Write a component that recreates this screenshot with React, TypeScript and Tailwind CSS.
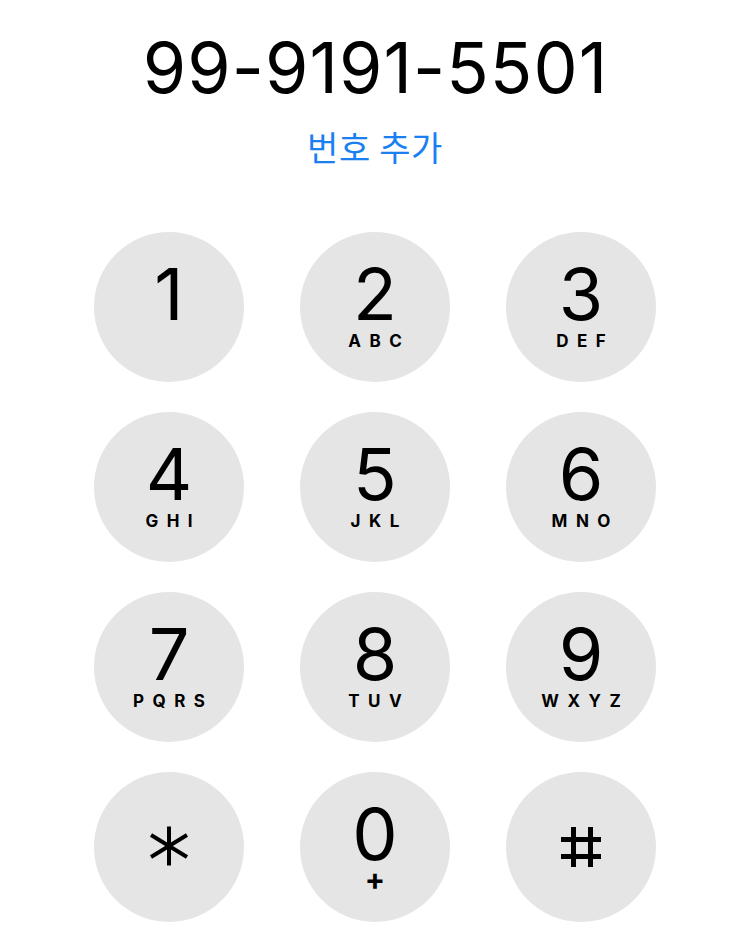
import React from "react";

const keys = [
  { digit: "1", letters: "" },
  { digit: "2", letters: "ABC" },
  { digit: "3", letters: "DEF" },
  { digit: "4", letters: "GHI" },
  { digit: "5", letters: "JKL" },
  { digit: "6", letters: "MNO" },
  { digit: "7", letters: "PQRS" },
  { digit: "8", letters: "TUV" },
  { digit: "9", letters: "WXYZ" },
];

const Star = () => (
  <svg width="38" height="40" viewBox="0 0 38 40" className="mt-[-2px]">
    <g stroke="#000" strokeWidth="4" strokeLinecap="butt">
      <line x1="19" y1="0.5" x2="19" y2="39.5" />
      <line x1="1" y1="9" x2="37" y2="31" />
      <line x1="1" y1="31" x2="37" y2="9" />
    </g>
  </svg>
);

const Hash = () => (
  <svg width="40" height="40" viewBox="0 0 40 40">
    <g fill="#000">
      <rect x="10" y="0" width="5" height="40" />
      <rect x="27" y="0" width="5" height="40" />
      <rect x="0" y="10" width="40" height="5" />
      <rect x="0" y="27" width="40" height="5" />
    </g>
  </svg>
);

const Key = ({ digit, letters }: { digit: string; letters: string }) => (
  <button className="w-[150px] h-[150px] rounded-full bg-[#e5e5e5] flex flex-col items-center pt-[32px]">
    <span className="text-[72px] leading-[60px] font-normal text-black">{digit}</span>
    <span className="mt-[9px] h-[17px] text-[17px] leading-none font-bold tracking-[0.5em] pl-[0.5em] text-black">
      {letters}
    </span>
  </button>
);

export default function App() {
  return (
    <div
      className="w-[750px] h-[936px] bg-white flex flex-col items-center overflow-hidden"
      style={{ fontFamily: "Inter, 'Noto Sans CJK KR', sans-serif" }}
    >
      <h1 className="pt-[33px] text-[70px] leading-none font-normal text-black tracking-[0.015em] pl-[0.015em]">
        99-9191-5501
      </h1>
      <p
        className="mt-[27px] text-[34px] leading-none text-[#1a80f2] tracking-[0.02em]"
        style={{ fontFamily: "'Noto Sans CJK KR', sans-serif" }}
      >
        번호 추가
      </p>
      <div className="mt-[68px] grid grid-cols-[150px_150px_150px] gap-x-[56px] gap-y-[30px]">
        {keys.map((k) => (
          <Key key={k.digit} digit={k.digit} letters={k.letters} />
        ))}
        <button className="w-[150px] h-[150px] rounded-full bg-[#e5e5e5] flex items-center justify-center">
          <Star />
        </button>
        <button className="w-[150px] h-[150px] rounded-full bg-[#e5e5e5] flex flex-col items-center pt-[32px]">
          <span className="text-[72px] leading-[60px] font-normal text-black">0</span>
          <span className="text-[30px] leading-none font-bold text-black">+</span>
        </button>
        <button className="w-[150px] h-[150px] rounded-full bg-[#e5e5e5] flex items-center justify-center">
          <Hash />
        </button>
      </div>
    </div>
  );
}
